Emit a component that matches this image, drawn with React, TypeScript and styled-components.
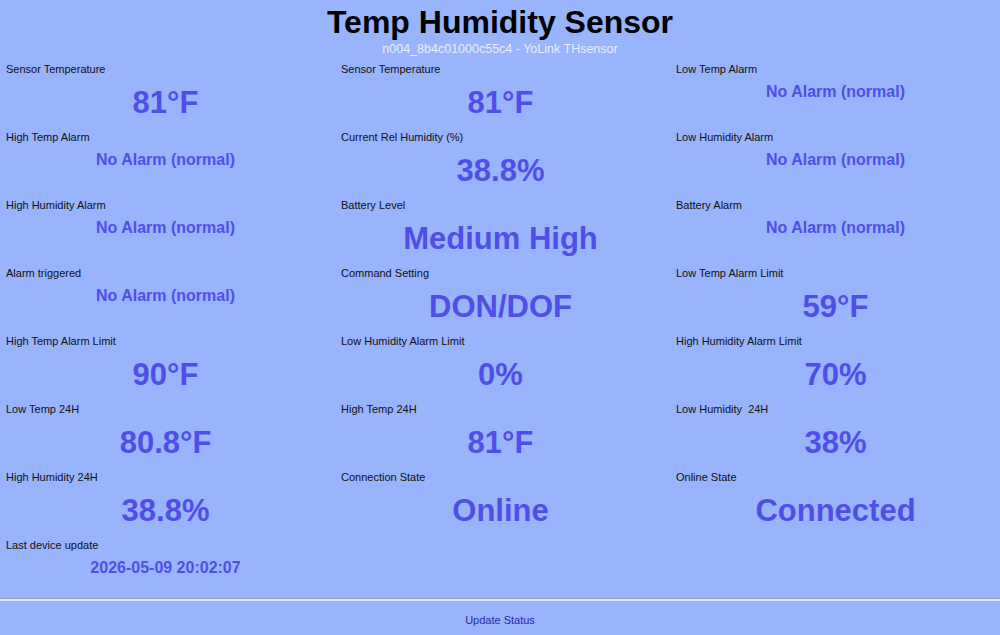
import React from 'react';
import styled, {createGlobalStyle} from "styled-components";

/**
 * Status page of a YoLink temperature / humidity sensor node:
 * header with node name, a three-column grid of readings,
 * and an "Update Status" footer bar.
 */

type Reading = {
    label: string
    value: string
    size: 'big' | 'alarm'
}

const alarm = 'No Alarm (normal)'

const readings: Reading[] = [
    {label: 'Sensor Temperature', value: '81°F', size: 'big'},
    {label: 'Sensor Temperature', value: '81°F', size: 'big'},
    {label: 'Low Temp Alarm', value: alarm, size: 'alarm'},
    {label: 'High Temp Alarm', value: alarm, size: 'alarm'},
    {label: 'Current Rel Humidity (%)', value: '38.8%', size: 'big'},
    {label: 'Low Humidity Alarm', value: alarm, size: 'alarm'},
    {label: 'High Humidity Alarm', value: alarm, size: 'alarm'},
    {label: 'Battery Level', value: 'Medium High', size: 'big'},
    {label: 'Battery Alarm', value: alarm, size: 'alarm'},
    {label: 'Alarm triggered', value: alarm, size: 'alarm'},
    {label: 'Command Setting', value: 'DON/DOF', size: 'big'},
    {label: 'Low Temp Alarm Limit', value: '59°F', size: 'big'},
    {label: 'High Temp Alarm Limit', value: '90°F', size: 'big'},
    {label: 'Low Humidity Alarm Limit', value: '0%', size: 'big'},
    {label: 'High Humidity Alarm Limit', value: '70%', size: 'big'},
    {label: 'Low Temp 24H', value: '80.8°F', size: 'big'},
    {label: 'High Temp 24H', value: '81°F', size: 'big'},
    {label: 'Low Humidity  24H', value: '38%', size: 'big'},
    {label: 'High Humidity 24H', value: '38.8%', size: 'big'},
    {label: 'Connection State', value: 'Online', size: 'big'},
    {label: 'Online State', value: 'Connected', size: 'big'},
    {label: 'Last device update', value: '2026-05-09 20:02:07', size: 'alarm'},
]

function App() {
    return (
        <>
            <GlobalStyle/>
            <Page>
                <Header>
                    <Title>Temp Humidity Sensor</Title>
                    <Subtitle>n004_8b4c01000c55c4 - YoLink THsensor</Subtitle>
                </Header>

                <Grid>
                    {readings.map((r, i) => (
                        <Cell key={i}>
                            <Label>{r.label}</Label>
                            <Value $size={r.size}>{r.value}</Value>
                        </Cell>
                    ))}
                </Grid>

                <Footer>
                    <UpdateButton>Update Status</UpdateButton>
                </Footer>
            </Page>
        </>
    );
}

const GlobalStyle = createGlobalStyle`
  html, body {
    margin: 0;
    padding: 0;
    background: #97b4fc;
    font-family: "Liberation Sans", Arial, sans-serif;
  }
`

const Page = styled.div`
  display: flex;
  flex-direction: column;
  height: 100vh;
  overflow: hidden;
  background: #97b4fc;
`

const Header = styled.div`
  display: flex;
  flex-direction: column;
  align-items: center;
  padding-top: 4px;
  height: 56px;
`

const Title = styled.h1`
  margin: 0;
  font-size: 32px;
  line-height: 36px;
  font-weight: bold;
  color: #000;
`

const Subtitle = styled.div`
  margin-top: 1px;
  font-size: 12.5px;
  line-height: 16px;
  color: #e8eeff;
`

const Grid = styled.div`
  display: grid;
  grid-template-columns: repeat(3, 335px);
`

const Cell = styled.div`
  display: flex;
  flex-direction: column;
`

const Label = styled.div`
  padding-left: 6px;
  font-size: 11px;
  line-height: 18px;
  color: #111;
  white-space: pre;
`

const Value = styled.div<{ $size: 'big' | 'alarm' }>`
  padding-right: 4px;
  text-align: center;
  font-weight: bold;
  color: #4f4fe8;
  font-size: ${p => p.$size === 'big' ? '31px' : '16px'};
  line-height: ${p => p.$size === 'big' ? '50px' : '28px'};
`

const Footer = styled.div`
  margin-top: auto;
  height: 37px;
  box-sizing: border-box;
  border-top: 1px solid #8aa1d9;
  box-shadow: inset 0 2px 0 #dfe9ff;
  display: flex;
  justify-content: center;
  padding-top: 14px;
`

const UpdateButton = styled.button`
  background: none;
  border: none;
  padding: 0;
  height: 14px;
  font-family: "Liberation Sans", Arial, sans-serif;
  font-size: 11px;
  line-height: 14px;
  color: #2a2aa6;
  cursor: pointer;
`

export default App;
